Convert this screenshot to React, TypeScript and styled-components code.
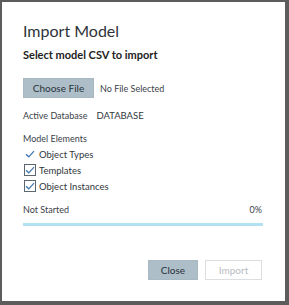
import styled, { createGlobalStyle } from "styled-components";

const GlobalStyle = createGlobalStyle`
  html, body {
    margin: 0;
    padding: 0;
    background: #5c5c5c;
  }
  body {
    font-family: "Lato", "Open Sans", sans-serif;
  }
`;

const Dialog = styled.div`
  box-sizing: border-box;
  width: 289px;
  height: 305px;
  border-style: solid;
  border-color: #5c5c5c;
  border-width: 2px 4px 4px 2px;
  background: #ffffff;
  padding: 19px 23px 0 21px;
  display: flex;
  flex-direction: column;
  color: #333a40;
`;

const Title = styled.h1`
  margin: 0;
  height: 20px;
  line-height: 20px;
  font-size: 16px;
  font-weight: 400;
  color: #2d3338;
`;

const Subtitle = styled.div`
  margin-top: 7px;
  height: 14px;
  line-height: 14px;
  font-size: 11px;
  font-weight: 700;
  color: #222;
`;

const FileRow = styled.div`
  margin-top: 16px;
  display: flex;
  align-items: center;
  gap: 6px;
`;

const Button = styled.button<{ $variant?: "primary" | "disabled" }>`
  box-sizing: border-box;
  height: 20px;
  padding: 0;
  font-family: inherit;
  font-size: 10px;
  line-height: 18px;
  cursor: pointer;
  border: 1px solid
    ${(p) => (p.$variant === "disabled" ? "#dcdfe1" : "#a9b9c3")};
  background: ${(p) => (p.$variant === "disabled" ? "#ffffff" : "#aebec8")};
  color: ${(p) => (p.$variant === "disabled" ? "#b7bcc0" : "#27323a")};
`;

const SmallText = styled.span`
  font-size: 9px;
  color: #3b4248;
`;

const InfoRow = styled.div<{ $gap?: number }>`
  margin-top: ${(p) => p.$gap ?? 0}px;
  height: 14px;
  line-height: 14px;
  display: flex;
  align-items: center;
  gap: 9px;
  font-size: 9px;
  color: #3b4248;
`;

const Value = styled.span`
  font-size: 9.5px;
  color: #30373c;
`;

const CheckRow = styled.label`
  height: 16px;
  display: flex;
  align-items: center;
  gap: 3px;
  font-size: 9.5px;
  color: #30373c;
  cursor: pointer;
`;

const Box = styled.span<{ $bare?: boolean }>`
  box-sizing: border-box;
  width: 12px;
  height: 12px;
  margin-left: 1px;
  display: flex;
  align-items: center;
  justify-content: center;
  border: 1px solid ${(p) => (p.$bare ? "transparent" : "#5b6670")};
  background: #fff;
`;

const ProgressHead = styled.div`
  margin-top: 9px;
  height: 14px;
  line-height: 14px;
  display: flex;
  justify-content: space-between;
  font-size: 9px;
  color: #3b4248;
`;

const Track = styled.div`
  margin-top: 6px;
  height: 3px;
  background: #b3e1f4;
  margin-right: -1px;
`;

const Footer = styled.div`
  margin-top: 34px;
  display: flex;
  justify-content: flex-end;
  gap: 7px;
`;

function Check({ bare }: { bare?: boolean }) {
  return (
    <Box $bare={bare}>
      <svg width="10" height="8" viewBox="0 0 10 8">
        <path
          d="M1 4.2 L3.8 6.8 L9 1.2"
          fill="none"
          stroke="#3d73b0"
          strokeWidth="1.2"
        />
      </svg>
    </Box>
  );
}

const elements = [
  { label: "Object Types", bare: true },
  { label: "Templates", bare: false },
  { label: "Object Instances", bare: false },
];

export default function App() {
  return (
    <>
      <GlobalStyle />
      <Dialog>
        <Title>Import Model</Title>
        <Subtitle>Select model CSV to import</Subtitle>
        <FileRow>
          <Button style={{ width: 71 }}>Choose File</Button>
          <SmallText>No File Selected</SmallText>
        </FileRow>
        <InfoRow $gap={11}>
          <span>Active Database</span>
          <Value>DATABASE</Value>
        </InfoRow>
        <InfoRow $gap={9}>Model Elements</InfoRow>
        <div style={{ marginTop: 0 }}>
          {elements.map((e) => (
            <CheckRow key={e.label}>
              <Check bare={e.bare} />
              {e.label}
            </CheckRow>
          ))}
        </div>
        <ProgressHead>
          <span>Not Started</span>
          <span>0%</span>
        </ProgressHead>
        <Track />
        <Footer>
          <Button style={{ width: 50 }}>Close</Button>
          <Button $variant="disabled" style={{ width: 57 }}>
            Import
          </Button>
        </Footer>
      </Dialog>
    </>
  );
}
